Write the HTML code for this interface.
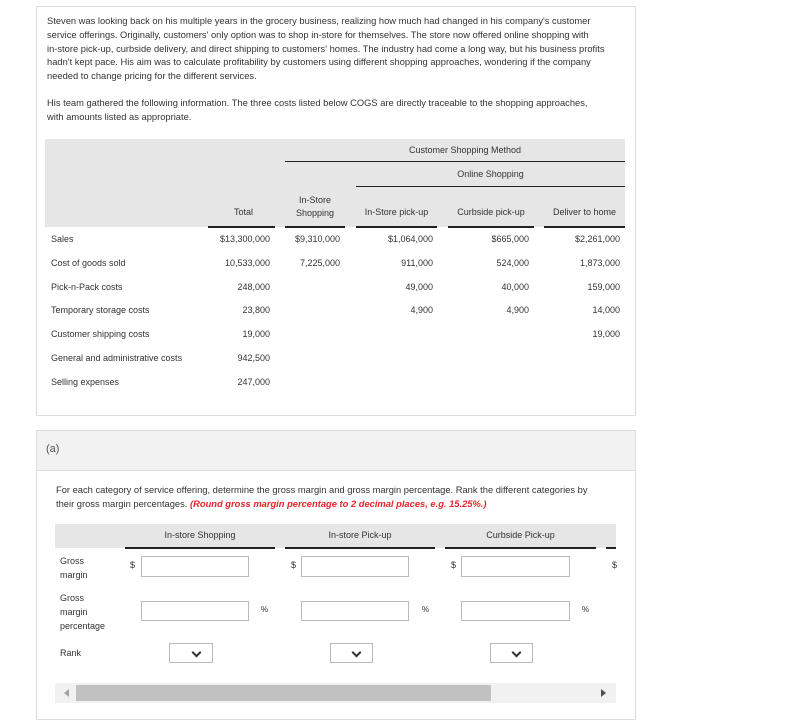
<!DOCTYPE html>
<html><head><meta charset="utf-8"><style>
*{margin:0;padding:0;box-sizing:border-box}
body{width:810px;height:709px;background:#fff;font-family:"Liberation Sans",sans-serif;font-size:9px;color:#333;position:relative;overflow:hidden}
.a{position:absolute;white-space:nowrap}
.r{text-align:right}
.c{text-align:center}
.card{position:absolute;border:1px solid #ddd;background:#fff}
.line{position:absolute;height:2px;background:#222}
.inp{position:absolute;border:1px solid #bbb;background:#fff;height:21px}
.sel{position:absolute;border:1px solid #bbb;background:#fff;height:20px}
.sel:after{content:"";position:absolute;right:12px;top:5px;width:5px;height:5px;border-right:2px solid #333;border-bottom:2px solid #333;transform:rotate(45deg)}
</style></head><body>
<div class="card" style="left:36px;top:6px;width:600px;height:410px"></div>
<div class="a" style="left:47px;top:15px;line-height:13.8px;font-size:9.35px">Steven was looking back on his multiple years in the grocery business, realizing how much had changed in his company's customer<br>service offerings. Originally, customers' only option was to shop in-store for themselves. The store now offered online shopping with<br>in-store pick-up, curbside delivery, and direct shipping to customers' homes. The industry had come a long way, but his business profits<br>hadn't kept pace. His aim was to calculate profitability by customers using different shopping approaches, wondering if the company<br>needed to change pricing for the different services.</div>
<div class="a" style="left:47px;top:97px;line-height:13.8px;font-size:9.35px">His team gathered the following information. The three costs listed below COGS are directly traceable to the shopping approaches,<br>with amounts listed as appropriate.</div>

<div style="position:absolute;left:45px;top:139px;width:580px;height:88px;background:#e6e6e6"></div>
<div class="a c" style="left:305px;width:320px;top:145px">Customer Shopping Method</div>
<div class="line" style="left:285px;width:340px;top:161px;height:1px"></div>
<div class="a c" style="left:356px;width:269px;top:169px">Online Shopping</div>
<div class="line" style="left:356px;width:269px;top:186px;height:1px"></div>
<div class="a c" style="left:285px;width:60px;top:194px;line-height:13px">In-Store<br>Shopping</div>
<div class="a r" style="left:200px;width:53px;top:207px">Total</div>
<div class="a c" style="left:356px;width:81px;top:207px">In-Store pick-up</div>
<div class="a c" style="left:448px;width:86px;top:207px">Curbside pick-up</div>
<div class="a c" style="left:544px;width:81px;top:207px">Deliver to home</div>
<div class="line" style="left:208px;width:67px;top:226px"></div>
<div class="line" style="left:285px;width:60px;top:226px"></div>
<div class="line" style="left:356px;width:81px;top:226px"></div>
<div class="line" style="left:448px;width:86px;top:226px"></div>
<div class="line" style="left:544px;width:81px;top:226px"></div>

<div class="a" style="left:51px;top:228px;line-height:23.8px">Sales<br>Cost of goods sold<br>Pick-n-Pack costs<br>Temporary storage costs<br>Customer shipping costs<br>General and administrative costs<br>Selling expenses</div>
<div class="a r" style="left:200px;width:70px;top:228px;line-height:23.8px">$13,300,000<br>10,533,000<br>248,000<br>23,800<br>19,000<br>942,500<br>247,000</div>
<div class="a r" style="left:280px;width:60px;top:228px;line-height:23.8px">$9,310,000<br>7,225,000</div>
<div class="a r" style="left:360px;width:73px;top:228px;line-height:23.8px">$1,064,000<br>911,000<br>49,000<br>4,900</div>
<div class="a r" style="left:450px;width:79px;top:228px;line-height:23.8px">$665,000<br>524,000<br>40,000<br>4,900</div>
<div class="a r" style="left:540px;width:80px;top:228px;line-height:23.8px">$2,261,000<br>1,873,000<br>159,000<br>14,000<br>19,000</div>

<div class="card" style="left:36px;top:430px;width:600px;height:290px"></div>
<div style="position:absolute;left:37px;top:431px;width:598px;height:40px;background:#f2f2f2;border-bottom:1px solid #ddd"></div>
<div class="a" style="left:46px;top:443px;font-size:11px;color:#555">(a)</div>
<div class="a" style="left:56px;top:484px;line-height:13.8px;font-size:9.35px">For each category of service offering, determine the gross margin and gross margin percentage. Rank the different categories by<br>their gross margin percentages. <i style="color:#e8232a;font-weight:bold">(Round gross margin percentage to 2 decimal places, e.g. 15.25%.)</i></div>

<div style="position:absolute;left:55px;top:524px;width:561px;height:24px;background:#e6e6e6"></div>
<div class="a c" style="left:125px;width:150px;top:530px">In-store Shopping</div>
<div class="a c" style="left:285px;width:150px;top:530px">In-store Pick-up</div>
<div class="a c" style="left:445px;width:151px;top:530px">Curbside Pick-up</div>
<div class="line" style="left:125px;width:150px;top:547px"></div>
<div class="line" style="left:285px;width:150px;top:547px"></div>
<div class="line" style="left:445px;width:151px;top:547px"></div>
<div class="line" style="left:606px;width:10px;top:547px"></div>

<div class="a" style="left:60px;top:554px;line-height:14px">Gross<br>margin</div>
<div class="a" style="left:60px;top:591px;line-height:14px">Gross<br>margin<br>percentage</div>
<div class="a" style="left:60px;top:648px">Rank</div>

<div class="a" style="left:130px;top:560px">$</div>
<div class="a" style="left:291px;top:560px">$</div>
<div class="a" style="left:451px;top:560px">$</div>
<div class="a" style="left:612px;top:560px">$</div>
<div class="inp" style="left:141px;top:556px;width:108px"></div>
<div class="inp" style="left:301px;top:556px;width:108px"></div>
<div class="inp" style="left:461px;top:556px;width:109px"></div>
<div class="inp" style="left:141px;top:601px;width:108px;height:20px"></div>
<div class="inp" style="left:301px;top:601px;width:108px;height:20px"></div>
<div class="inp" style="left:461px;top:601px;width:109px;height:20px"></div>
<div class="a" style="left:261px;top:605px;font-size:8px">%</div>
<div class="a" style="left:422px;top:605px;font-size:8px">%</div>
<div class="a" style="left:582px;top:605px;font-size:8px">%</div>
<div class="sel" style="left:169px;top:643px;width:44px"></div>
<div class="sel" style="left:330px;top:643px;width:43px"></div>
<div class="sel" style="left:490px;top:643px;width:43px"></div>

<div style="position:absolute;left:55px;top:683px;width:561px;height:20px;background:#f1f1f1"></div>
<div style="position:absolute;left:76px;top:685px;width:415px;height:16px;background:#c1c1c1"></div>
<div style="position:absolute;left:64px;top:689px;width:0;height:0;border-top:4px solid transparent;border-bottom:4px solid transparent;border-right:5px solid #a3a3a3"></div>
<div style="position:absolute;left:601px;top:689px;width:0;height:0;border-top:4px solid transparent;border-bottom:4px solid transparent;border-left:5px solid #505050"></div>
</body></html>
